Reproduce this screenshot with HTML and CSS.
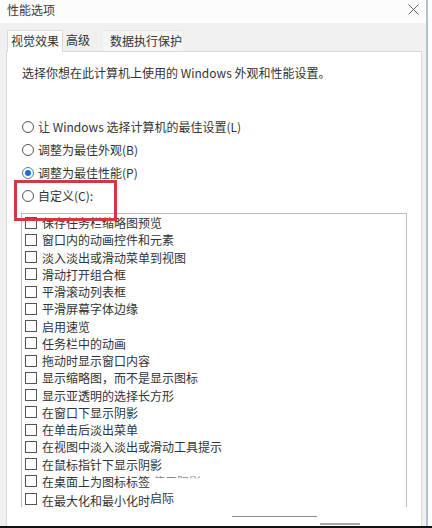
FILE: index.html
```html
<!DOCTYPE html>
<html lang="zh-CN">
<head>
<meta charset="utf-8">
<title>性能选项</title>
<link rel="stylesheet" href="styles.css">
</head>
<body>
<div class="page">
  <div class="main">
    <div class="dialog">
      <div class="titlebar">
        <span class="title">性能选项</span>
        <svg class="close" width="11" height="11" viewBox="0 0 11 11"><path d="M0.5 0.5 L10.5 10.5 M10.5 0.5 L0.5 10.5" stroke="#666" stroke-width="1" fill="none"/></svg>
      </div>
      <div class="tabs">
        <div class="tab active">视觉效果</div>
        <div class="tab second">高级</div>
        <div class="tab third">数据执行保护</div>
      </div>
      <div class="panel">
        <div class="desc">选择你想在此计算机上使用的 Windows 外观和性能设置。</div>
        <div class="options">
          <div class="opt"><span class="radio"></span><span>让 Windows 选择计算机的最佳设置(L)</span></div>
          <div class="opt"><span class="radio"></span><span>调整为最佳外观(B)</span></div>
          <div class="opt"><span class="radio checked"></span><span>调整为最佳性能(P)</span></div>
          <div class="opt"><span class="radio"></span><span>自定义(C):</span></div>
        </div>
        <div class="list">
          <div class="item"><span class="check"></span><span>保存任务栏缩略图预览</span></div>
          <div class="item"><span class="check"></span><span>窗口内的动画控件和元素</span></div>
          <div class="item"><span class="check"></span><span>淡入淡出或滑动菜单到视图</span></div>
          <div class="item"><span class="check"></span><span>滑动打开组合框</span></div>
          <div class="item"><span class="check"></span><span>平滑滚动列表框</span></div>
          <div class="item"><span class="check"></span><span>平滑屏幕字体边缘</span></div>
          <div class="item"><span class="check"></span><span>启用速览</span></div>
          <div class="item"><span class="check"></span><span>任务栏中的动画</span></div>
          <div class="item"><span class="check"></span><span>拖动时显示窗口内容</span></div>
          <div class="item"><span class="check"></span><span>显示缩略图，而不是显示图标</span></div>
          <div class="item"><span class="check"></span><span>显示亚透明的选择长方形</span></div>
          <div class="item"><span class="check"></span><span>在窗口下显示阴影</span></div>
          <div class="item"><span class="check"></span><span>在单击后淡出菜单</span></div>
          <div class="item"><span class="check"></span><span>在视图中淡入淡出或滑动工具提示</span></div>
          <div class="item"><span class="check"></span><span>在鼠标指针下显示阴影</span></div>
          <div class="item"><span class="check"></span><span>在桌面上为图标标签<span class="ghost">使用阴影</span></span></div>
          <div class="item"><span class="check"></span><span>在最大化和最小化时<span class="raised">启际</span></span></div>
        </div>
        <div class="highlight"></div>
      </div>
    </div>
    <div class="outside"></div>
    <div class="streak streak-a"></div>
    <div class="streak streak-b"></div>
  </div>
  <div class="bottom"></div>
</div>
</body>
</html>
```

FILE: styles.css
```css
html, body {
  margin: 0;
  padding: 0;
}

body {
  width: 432px;
  height: 528px;
  overflow: hidden;
  background: #ffffff;
  font-family: "Noto Sans CJK SC", "Noto Sans", sans-serif;
  font-size: 12px;
  color: #333333;
}

.page {
  display: flex;
  flex-direction: column;
  height: 528px;
}

.main {
  flex: 1;
  min-height: 0;
  display: flex;
  position: relative;
}

.dialog {
  width: 426px;
  border-right: 2px solid #b3c1d1;
  display: flex;
  flex-direction: column;
  background: #f0f0f0;
  overflow: hidden;
}

.outside {
  flex: 1;
  background: #ffffff;
}

.bottom {
  height: 2px;
  background: #111111;
}

/* title bar */
.titlebar {
  height: 23px;
  background: #fcfcfc;
  display: flex;
  align-items: flex-start;
  justify-content: space-between;
  padding: 0 7px;
}

.title {
  margin-top: 2px;
  line-height: 16px;
  color: #3a3a3a;
}

.close {
  margin-top: 4px;
}

/* tabs */
.tabs {
  height: 28px;
  display: flex;
  align-items: flex-end;
  padding-left: 7px;
}

.tab {
  height: 21px;
  line-height: 21px;
  padding: 0 4px;
  color: #333333;
}

.tab.active {
  background: #ffffff;
  border: 1px solid #dadada;
  border-bottom: none;
  height: 21px;
  margin-bottom: -1px;
  padding: 0 3px;
  position: relative;
  z-index: 1;
  line-height: 20px;
}

.tab.second {
  padding: 0 13px 0 3px;
  line-height: 20px;
}

.tab.third {
  padding: 0 1px 0 7px;
  background: #f5f5f5;
  border-top: 1px solid #e6e6e6;
  height: 20px;
  line-height: 20px;
}

/* panel */
.panel {
  flex: 1;
  margin: 0 4px 0 6px;
  background: #ffffff;
  border: 1px solid #d9d9d9;
  border-bottom: none;
  position: relative;
}

.desc {
  margin: 13px 0 0 15px;
  line-height: 16px;
}

.options {
  margin-top: 34px;
}

.opt {
  display: flex;
  align-items: center;
  height: 23px;
  padding-left: 15px;
  gap: 4px;
}

.radio {
  width: 12px;
  height: 12px;
  box-sizing: border-box;
  border: 1px solid #555555;
  border-radius: 50%;
  display: flex;
  align-items: center;
  justify-content: center;
  flex: none;
}

.radio.checked {
  border-color: #3f7fc0;
}

.radio.checked::after {
  content: "";
  width: 6px;
  height: 6px;
  border-radius: 50%;
  background: #1c6fd0;
}

/* check list */
.list {
  margin: 6px 14px 0 14px;
  border: 1px solid #bcbcbc;
  border-bottom: none;
}

.item {
  height: 17.25px;
  display: flex;
  align-items: center;
  padding-left: 3px;
  gap: 5px;
  white-space: nowrap;
}

.check {
  width: 12px;
  height: 12px;
  box-sizing: border-box;
  border: 1px solid #555555;
  background: #ffffff;
  flex: none;
}

.ghost {
  color: #8a8a8a;
  clip-path: inset(0 0 68% 0);
  margin-left: 3px;
}

.raised {
  vertical-align: 3px;
}

/* annotation */
.highlight {
  position: absolute;
  left: 7px;
  top: 128px;
  width: 103px;
  height: 41px;
  box-sizing: border-box;
  border: 3px solid #d2393f;
  pointer-events: none;
}

.streak {
  position: absolute;
  pointer-events: none;
}

.streak-a {
  left: 232px;
  top: 516px;
  width: 85px;
  height: 1px;
  background: #8c8c8c;
}

.streak-b {
  left: 320px;
  top: 523px;
  width: 40px;
  height: 2px;
  background: #a8a8a8;
}
```
